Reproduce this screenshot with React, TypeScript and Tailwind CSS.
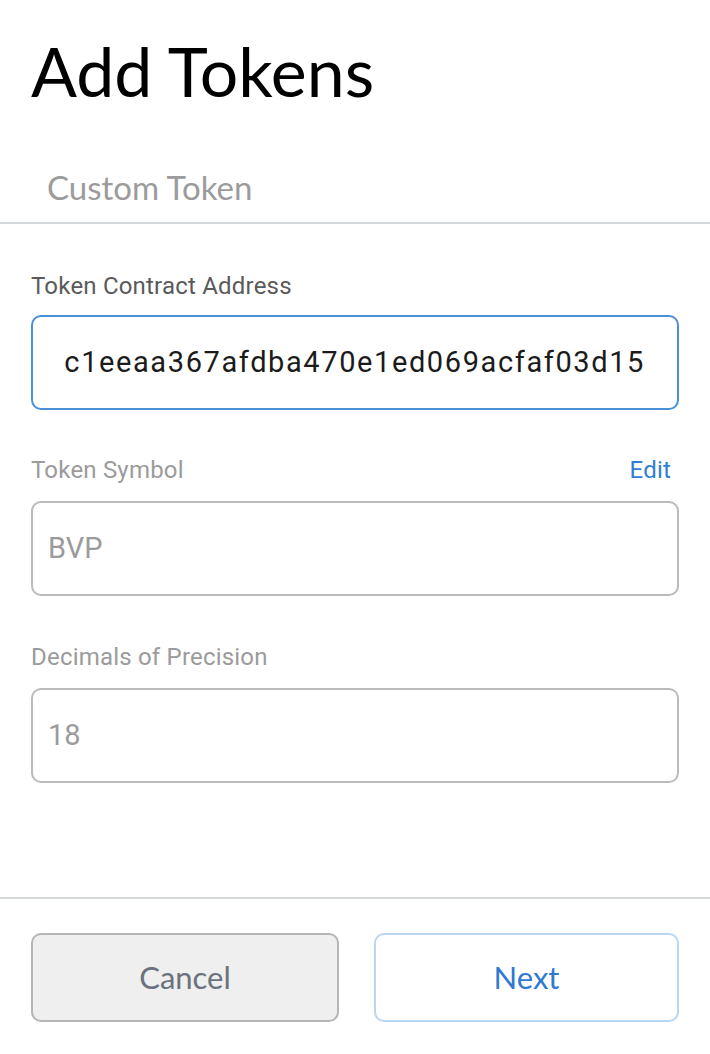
import React from 'react';

const label = "font-['Roboto',sans-serif] text-[24px] leading-[28px] tracking-[0.2px]";
const inputText = "font-['Roboto',sans-serif] text-[29px] text-[#9b9b9b]";

function Field({ title, value, right }: { title: string; value: string; right?: React.ReactNode }) {
  return (
    <div className="flex flex-col">
      <div className="flex items-center justify-between pr-[8px]">
        <span className={`${label} text-[#9b9b9b]`}>{title}</span>
        {right}
      </div>
      <div className="mt-[17px] h-[95px] rounded-[10px] border-2 border-[#bbbbbb] flex items-center px-[15px]">
        <span className={inputText}>{value}</span>
      </div>
    </div>
  );
}

export default function App() {
  return (
    <div className="w-[710px] h-[1054px] bg-white flex flex-col">
      <h1 className="font-['Lato',sans-serif] text-[68px] leading-none text-black pl-[31px] pt-[37px]">Add Tokens</h1>
      <div className="mt-[62px] pl-[47px] pb-[15px] border-b-2 border-[#d6d9dc]">
        <span className="block font-['Lato',sans-serif] text-[33px] leading-[40px] text-[#9b9b9b]">Custom Token</span>
      </div>

      <div className="flex flex-col px-[31px] pt-[48px]">
        <div className="flex flex-col">
          <span className={`${label} text-[#5a5a5a]`}>Token Contract Address</span>
          <div className="mt-[15px] h-[95px] rounded-[10px] border-2 border-[#4a90d9] flex items-center px-[29px] pr-[32px]">
            <div className="flex-1 flex justify-end overflow-hidden">
              <span className="shrink-0 font-['Roboto',sans-serif] text-[29px] tracking-[1.6px] text-[#1b1b1b] whitespace-nowrap">0x5d0158a5a7b1a69cd30c1eeaa367afdba470e1ed069acfaf03d15</span>
            </div>
          </div>
        </div>

        <div className="mt-[46px]">
          <Field
            title="Token Symbol"
            value="BVP"
            right={<span className={`${label} text-[#2f80d1]`}>Edit</span>}
          />
        </div>

        <div className="mt-[47px]">
          <Field title="Decimals of Precision" value="18" />
        </div>
      </div>

      <div className="mt-auto border-t-2 border-[#d6d9dc] px-[31px] pt-[34px] pb-[32px] flex gap-[35px]">
        <button className="w-[308px] h-[89px] rounded-[10px] border-2 border-[#b5b5b5] bg-[#efefef] font-['Lato',sans-serif] text-[31px] text-[#6a737d]">Cancel</button>
        <button className="flex-1 h-[89px] rounded-[10px] border-2 border-[#b9d6f2] bg-white font-['Lato',sans-serif] text-[31px] text-[#2f7ad0]">Next</button>
      </div>
    </div>
  );
}
